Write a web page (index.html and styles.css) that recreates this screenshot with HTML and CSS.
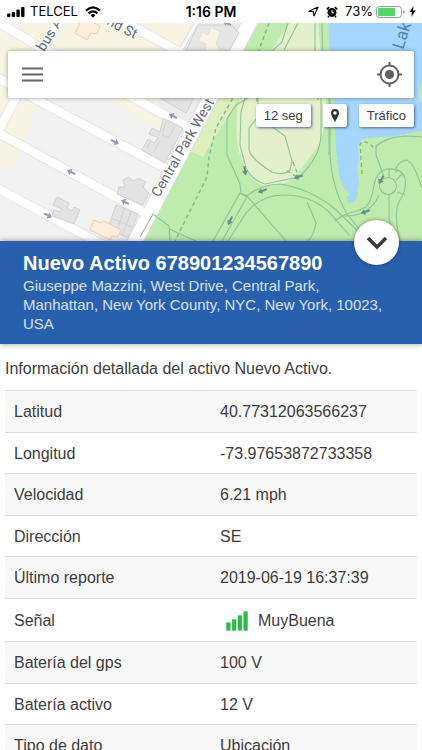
FILE: index.html
```html
<!DOCTYPE html>
<html lang="es">
<head>
<meta charset="utf-8">
<meta name="viewport" content="width=device-width, initial-scale=1">
<title>Nuevo Activo</title>
<link rel="stylesheet" href="styles.css">
</head>
<body>
<div class="app">
  <header class="status">
    <div class="status-side">
      <svg width="19" height="12" viewBox="0 0 19 12" aria-hidden="true"><rect x="1" y="7.500" width="3.400" height="3.500" rx="1"/><rect x="5.700" y="6" width="3.400" height="5" rx="1"/><rect x="10.400" y="3.500" width="3.400" height="7.500" rx="1"/><rect x="15.100" y="1" width="3.400" height="10" rx="1"/></svg>
      <span>TELCEL</span>
      <svg class="wifi" width="16" height="12" viewBox="0 0 16 12" aria-hidden="true"><g fill="none" stroke="#000" stroke-width="2.200"><path d="M1 4.600Q8-2 15 4.600"/><path d="M3.600 7.400Q8 3.200 12.400 7.400"/></g><path d="M5.600 9.200Q8 7 10.400 9.200L8 11.800z"/></svg>
    </div>
    <time class="clock">1:16 PM</time>
    <div class="status-side status-end">
      <svg width="11" height="11" viewBox="0 0 11 11" aria-hidden="true"><path d="M1 5.200 10 1 6 10 5.400 5.600z" fill="none" stroke="#000" stroke-width="1.100" stroke-linejoin="round"/></svg>
      <svg class="alarm" width="12" height="12" viewBox="0 0 12 12" aria-hidden="true"><circle cx="6" cy="6.400" r="4.500"/><path d="M.8 3.400 3.200 1M11.200 3.400 8.800 1M3 10 2 11.400M9 10l1 1.400" stroke="#000" stroke-width="1.600"/><path d="M6 3.800V6.800H8" fill="none" stroke="#fff" stroke-width="1"/></svg>
      <span class="charge">73%</span>
      <svg width="30" height="12" viewBox="0 0 30 12" aria-hidden="true"><rect x=".5" y=".5" width="25" height="11" rx="3" fill="#fff" stroke="#999"/><rect x="2" y="2" width="17" height="8" rx="1" fill="#4cd964"/><path d="M27.300 4v4q1.500-.5 1.500-2t-1.500-2z" fill="#999"/></svg>
      <svg width="7" height="11" viewBox="0 0 7 11" aria-hidden="true"><path d="M4.500 0 .5 6H3L2.300 11 6.600 4.600H4z"/></svg>
    </div>
  </header>

  <section class="map">
    <svg class="map-art" viewBox="0 23 422 218" preserveAspectRatio="xMidYMid slice" role="img" aria-label="Mapa de Central Park West">
      <path d="M0 23H422V241H0z" fill="#f2f2f2"/>
      <path d="M0 23H245L218 75 190 125 162 128 134 129 110 112 70 98 41 100 27 130 12 170 0 169z" fill="#f8f4e3"/>
      <path d="M60 98 110 98 132 114 150 127 130 128 105 114 80 125 40 105z" fill="#f2f2f2"/>
      <path d="M199 23H245L204 101 190 123 158 104 177 55z" fill="#ececec"/>
      <path d="M258 23H422V241H137z" fill="#bfebac"/>
      <path d="M188 150 218 98H239L203 157z" fill="#dcefbd"/>
      <path d="M290 23H318Q322 70 326 100Q328 123 319 145L294 178Q284 186 266 186Q247 183 238 148Q234 122 239 98L273 48z" fill="#e4f0cb"/>
      <path d="M328 23H422V131L391 137Q374 136 362 140L358 144 359 160 357 169 359 182 357 198Q352 204 348 202L346 197 350 194Q341 187 339 174L336 150 334 102 331 70z" fill="#a5d7fe"/>
      <path d="M422 82Q415 99 422 103z" fill="#bfebac"/>
      <path d="M406 98 411 101 412 98z" fill="#bfebac"/>
      <g fill="none" stroke="#e2e3e5" stroke-width="10">
        <path d="M-5 20 33 43 187 127"/><path d="M-5 76 43 103 165 168"/><path d="M-5 131 143 212"/><path d="M-5 187 105 246"/><path d="M105 11 172 48 225 78"/><path d="M64 13 31 68-4 136"/>
      </g>
      <path d="M130 251 252 18" stroke="#dedfe0" stroke-width="16"/>
      <path d="M197 22 178 55" stroke="#dcdddf" stroke-width="5"/>
      <g fill="none" stroke="#fff" stroke-width="8.500">
        <path d="M-5 20 33 43 187 127"/><path d="M-5 76 43 103 165 168"/><path d="M-5 131 143 212"/><path d="M-5 187 105 246"/><path d="M105 11 172 48 225 78"/><path d="M64 13 31 68-4 136"/>
      </g>
      <path d="M130 251 252 18" stroke="#fff" stroke-width="14"/>
      <path d="M197 22 178 55" stroke="#fff" stroke-width="3"/>
      <g fill="#e3e3e3" stroke="#d2d2d4" stroke-width="1">
        <path d="M163 118 183 128 165 163 142 150 148 139 154 143 158 138 149 134 152 128 160 132z"/>
        <path d="M166 121 162 135 169 138 174 127M147 148 150 141M154 151 160 141" fill="none"/>
        <path d="M123 180 128 177 134 181 138 178 146 182 143 187 149 193 143 205 117 194 119 187 125 187z"/>
        <path d="M57 197 69 203 67 208 72 211 74 207 80 210 74 224 52 216 54 210 60 212 62 209 53 205z"/>
        <path d="M116 205 138 214 128 238 108 228z"/><path d="M111 218 132 227M124 209 116 234M131 212 122 236" fill="none"/>
        <path d="M160 98H194L186 113z"/>
        <path d="M198 25H232L239 33 229 51H186z" fill="#e6e6e6"/>
      </g>
      <path d="M198 41 202 32 208 35 211 27 221 32 216 43 220 51H205L206 44z" fill="#f8f4e3" stroke="#deded8"/>
      <g fill="#fdeedb" stroke="#f5cfa6"><path d="M82 16 100 26 97 34 91 33 87 40 75 33 79 25z"/><path d="M94 220 101 223 104 221 121 230 118 237 112 236 110 240 90 230z"/></g>
      <g fill="none" stroke="#8cc59a" stroke-width="1.100">
        <path d="M288 23 282 42 271 52 261 75 248 98 236 105 227 119 227 155 240 184 241 193 247 196 286 241"/>
        <path d="M298 23 284 50M315 23V50L318 100M322 23 323 95M329 98V155"/>
        <path d="M245 98 241 112 240 145 246 168Q252 180 265 184L299 177Q320 158 321 135V98"/>
        <path d="M258 98 258 117 249 128V150Q252 160 272 172Q284 176 290 170L292 161 285 136 274 128 258 117"/>
        <path d="M213 241 240 193 247 197 222 241M246 197Q259 185 280 184Q311 189 335 209L365 238M228 241 246 213Q261 195 284 195Q310 195 328 211L350 236"/>
        <path d="M307 202Q312 213 316 223Q314 235 308 241"/>
        <path d="M330 98V155Q332 188 347 214L369 241M335 221Q343 214 357 211L366 207Q372 200 374 185Q376 172 387 169Q402 168 405 178Q407 190 400 200Q395 207 397 225L400 241"/>
        <path d="M335 221 342 216Q370 217 379 195M384 177 376 155 376 146Q387 137 405 136L422 137M396 173Q395 163 406 160Q413 160 422 188M397 192 405 195M389 195V219L395 241"/>
        <circle cx="388" cy="186" r="8.500"/><path d="M389 169V177M396 180 402 174"/>
        <path d="M140 237 153 214 169 226 170 241M170 229 180 234 196 241"/>
      </g>
      <g fill="none" stroke="#78bb8b" stroke-width="1.300" stroke-dasharray="4 3">
        <path d="M269 23 259 50 234 96 216 128 209 157 207 177 175 241"/><path d="M362 174 360 144Q365 138 375 149M293 162 299 177M287 171 297 177M257 98V118"/>
      </g>
      <g class="arrows">
        <path transform="translate(115 142) rotate(28)" d="M-4.500-1H0V-3.500L4.500 0 0 3.500V1H-4.500z"/>
        <path transform="translate(48 215.500) rotate(28)" d="M-4.500-1H0V-3.500L4.500 0 0 3.500V1H-4.500z"/>
        <path transform="translate(173 116) rotate(208)" d="M-4.500-1H0V-3.500L4.500 0 0 3.500V1H-4.500z"/>
        <path transform="translate(71 172) rotate(208)" d="M-4.500-1H0V-3.500L4.500 0 0 3.500V1H-4.500z"/>
        <path transform="translate(125 202) rotate(208)" d="M-4.500-1H0V-3.500L4.500 0 0 3.500V1H-4.500z"/>
        <path transform="translate(227 23) rotate(208)" d="M-4.500-1H0V-3.500L4.500 0 0 3.500V1H-4.500z"/>
      </g>
      <g class="arrows arrows-park">
        <path transform="translate(245 171) rotate(82)" d="M-5-1H0V-3L4.500 0 0 3V1H-5z"/>
        <path transform="translate(298 177) rotate(160)" d="M-5-1H0V-3L4.500 0 0 3V1H-5z"/>
        <path transform="translate(262 191) rotate(160)" d="M-5-1H0V-3L4.500 0 0 3V1H-5z"/>
        <path transform="translate(230 221) rotate(115)" d="M-5-1H0V-3L4.500 0 0 3V1H-5z"/>
        <path transform="translate(381 180) rotate(120)" d="M-5-1H0V-3L4.500 0 0 3V1H-5z"/>
        <path transform="translate(365 212) rotate(160)" d="M-5-1H0V-3L4.500 0 0 3V1H-5z"/>
      </g>
      <g class="streets">
        <text transform="translate(159 198) rotate(-60)">Central Park West</text>
        <text transform="translate(44 52) rotate(-58)">bus A</text>
        <text transform="translate(106 24) rotate(28)">nd St</text>
        <text class="water" transform="translate(403 50) rotate(-72)">Lak</text>
      </g>
    </svg>
    <div class="toolbar">
      <button class="icon-button" type="button" aria-label="Menú"><svg width="21" height="15" viewBox="0 0 21 15"><path d="M0 1.500H21M0 7.500H21M0 13.500H21" stroke="#666" stroke-width="2"/></svg></button>
      <button class="icon-button" type="button" aria-label="Mi ubicación"><svg width="25" height="25" viewBox="0 0 25 25"><circle cx="12.500" cy="12.500" r="9" fill="none" stroke="#606060" stroke-width="2"/><circle cx="12.500" cy="12.500" r="4.600" fill="#606060"/><path d="M12.500 0V4M12.500 21V25M0 12.500H4M21 12.500H25" stroke="#606060" stroke-width="2"/></svg></button>
    </div>
    <div class="chips">
      <button class="chip" type="button">12 seg</button>
      <button class="chip" type="button" aria-label="Marcador"><svg width="8" height="13" viewBox="0 0 8 13"><path fill="#333" fill-rule="evenodd" d="M4 0A4 4 0 0 1 8 4Q8 6 6.500 8.500L4 13 1.500 8.500Q0 6 0 4A4 4 0 0 1 4 0M4 2.200A1.800 1.800 0 1 0 4 5.800A1.800 1.800 0 1 0 4 2.200"/></svg></button>
      <button class="chip" type="button">Tráfico</button>
    </div>
  </section>

  <section class="asset">
    <h1>Nuevo Activo 678901234567890</h1>
    <p>Giuseppe Mazzini, West Drive, Central Park, Manhattan, New York County, NYC, New York, 10023, USA</p>
    <button class="collapse" type="button" aria-label="Ocultar detalles"><svg width="22" height="14" viewBox="0 0 22 14"><path d="M2 2 11 11 20 2" fill="none" stroke="#3c3c3c" stroke-width="3.600"/></svg></button>
  </section>

  <main class="details">
    <p>Información detallada del activo Nuevo Activo.</p>
    <table>
      <tbody>
        <tr><th scope="row">Latitud</th><td>40.77312063566237</td></tr>
        <tr><th scope="row">Longitud</th><td>-73.97653872733358</td></tr>
        <tr><th scope="row">Velocidad</th><td>6.21 mph</td></tr>
        <tr><th scope="row">Dirección</th><td>SE</td></tr>
        <tr><th scope="row">Último reporte</th><td>2019-06-19 16:37:39</td></tr>
        <tr><th scope="row">Señal</th><td><span class="signal"><svg width="22" height="20" viewBox="0 0 22 20" aria-hidden="true"><path d="M0 11H4.600V20H0zM5.800 8H10.400V20H5.800zM11.600 4H16.200V20H11.600zM17.200 0H22V20H17.200z" fill="#c5edcc"/><path d="M.4 11.400H4.400V19.600H.4zM6.100 8.400H10.100V19.600H6.100zM11.900 4.400H15.900V19.600H11.900zM17.600.4H21.600V19.600H17.600z" fill="#27bd45"/></svg>MuyBuena</span></td></tr>
        <tr><th scope="row">Batería del gps</th><td>100 V</td></tr>
        <tr><th scope="row">Batería activo</th><td>12 V</td></tr>
        <tr><th scope="row">Tipo de dato</th><td>Ubicación</td></tr>
      </tbody>
    </table>
  </main>
</div>
</body>
</html>
```
FILE: styles.css
```css
* {
  box-sizing: border-box;
}

body {
  margin: 0;
  background: #fff;
  color: #3d3d3d;
  font: 16px/24px "Liberation Sans", Arial, sans-serif;
}

h1,
p {
  margin: 0;
}

button {
  display: flex;
  align-items: center;
  justify-content: center;
  padding: 0;
  border: 0;
  background: #fff;
  color: inherit;
  font: inherit;
}

.app {
  display: flex;
  flex-direction: column;
  height: 100vh;
  overflow: hidden;
}

.status {
  display: grid;
  grid-template-columns: 1fr auto 1fr;
  align-items: center;
  padding: 0 6px;
  color: #000;
  font: 13px/23px Inter, sans-serif;
}

.status-side {
  display: flex;
  align-items: center;
  gap: 5px;
}

.wifi {
  margin-left: 2px;
}

.status-end {
  justify-content: flex-end;
  gap: 3px;
}

.alarm,
.charge {
  margin-left: 4px;
}

.clock {
  font-size: 14px;
  font-weight: 600;
}

.map {
  position: relative;
  flex: none;
  padding: 28px 8px 0;
  height: 218px;
}

.map-art {
  position: absolute;
  inset: 0;
  width: 100%;
  height: 100%;
}

.arrows {
  fill: #989bb8;
}

.arrows-park {
  fill: #668f86;
}

.streets {
  fill: #656a73;
  stroke: #fff;
  stroke-width: 2px;
  paint-order: stroke;
  font: 14px Roboto, sans-serif;
}

.water {
  fill: #5181c0;
  stroke: none;
  font-size: 17px;
}

.toolbar {
  position: relative;
  display: flex;
  align-items: center;
  justify-content: space-between;
  height: 47px;
  padding: 0 12px 0 14px;
  border-radius: 2px;
  background: #fff;
  box-shadow: 0 0 4px rgba(0, 0, 0, 0.4);
}

.chips {
  position: relative;
  display: flex;
  justify-content: flex-end;
  gap: 12px;
  margin-top: 6px;
}

.chip {
  height: 23px;
  padding: 0 8px;
  border-radius: 2px;
  box-shadow: 1px 1px 3px #53639a;
  font-size: 13px;
}

.asset {
  position: relative;
  flex: none;
  padding: 10px 23px 11px;
  background: #2960ae;
  box-shadow: 0 0 6px rgba(0, 0, 0, 0.4);
  color: #d5e2f7;
  font-size: 15px;
  line-height: 19px;
}

.asset h1 {
  color: #fff;
  font-size: 20px;
  font-weight: 700;
  line-height: 25px;
}

.asset p {
  padding-right: 8px;
}

.collapse {
  position: absolute;
  top: -21px;
  right: 23px;
  width: 45px;
  height: 45px;
  border-radius: 50%;
  box-shadow: 0 0 4px rgba(0, 0, 0, 0.4);
}

.details {
  flex: 1;
  min-height: 0;
  padding: 13px 5px 0;
  overflow-y: auto;
  scrollbar-width: none;
}

table {
  width: 100%;
  margin-top: 9px;
  border-spacing: 0;
  table-layout: fixed;
}

th,
td {
  padding: 9px 9px 7px;
  border-top: 1px solid #dedede;
  font-weight: 400;
  text-align: left;
}

tr:nth-child(odd) > * {
  padding-bottom: 8px;
  background: #f8f8f8;
}

.signal {
  display: flex;
  align-items: center;
  gap: 10px;
  height: 26px;
  padding-left: 6px;
}
```
